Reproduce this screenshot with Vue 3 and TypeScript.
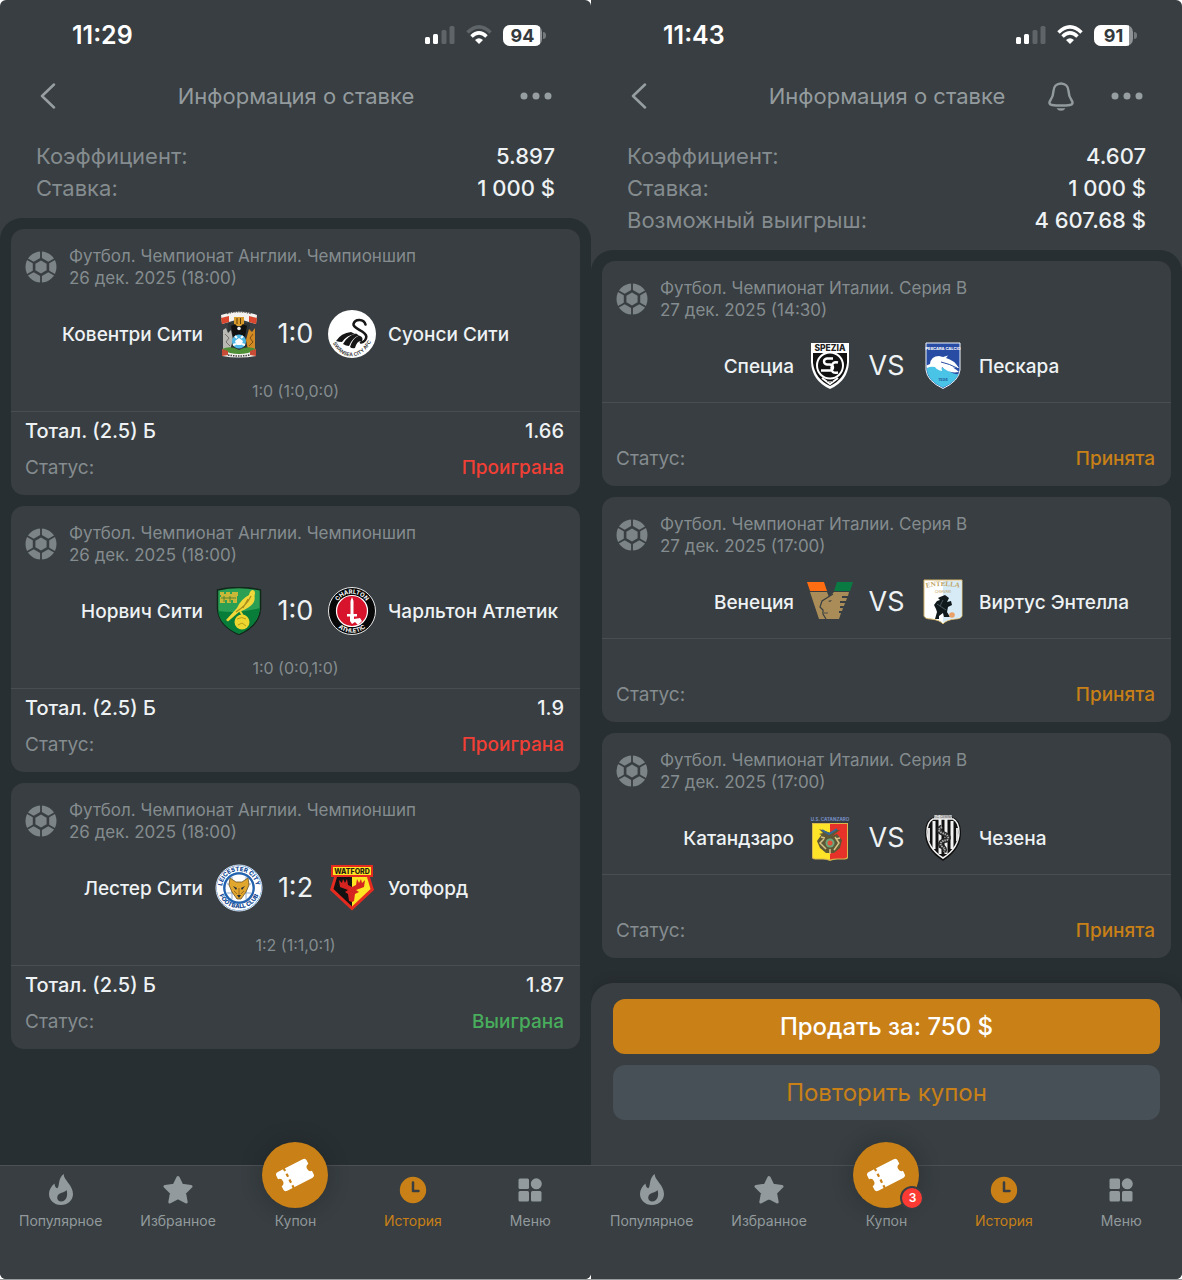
<script setup lang="ts">
interface Team {
  name: string
  crest: string
}

interface Bet {
  league: string
  date: string
  home: Team
  away: Team
  score: string
  periods?: string
  market?: string
  odds?: string
  status: string
  tone: 'lost' | 'won' | 'open'
}

interface Screen {
  id: string
  time: string
  battery: number
  weakWifi: boolean
  bell: boolean
  summary: { label: string; value: string }[]
  bets: Bet[]
  actions: boolean
  badge?: number
}

const england = 'Футбол. Чемпионат Англии. Чемпионшип'
const italy = 'Футбол. Чемпионат Италии. Серия В'

const screens: Screen[] = [
  {
    id: 'settled',
    time: '11:29',
    battery: 94,
    weakWifi: true,
    bell: false,
    summary: [
      { label: 'Коэффициент:', value: '5.897' },
      { label: 'Ставка:', value: '1 000 $' },
    ],
    bets: [
      {
        league: england, date: '26 дек. 2025 (18:00)',
        home: { name: 'Ковентри Сити', crest: 'coventry' }, away: { name: 'Суонси Сити', crest: 'swansea' },
        score: '1:0', periods: '1:0 (1:0,0:0)', market: 'Тотал. (2.5) Б', odds: '1.66',
        status: 'Проиграна', tone: 'lost',
      },
      {
        league: england, date: '26 дек. 2025 (18:00)',
        home: { name: 'Норвич Сити', crest: 'norwich' }, away: { name: 'Чарльтон Атлетик', crest: 'charlton' },
        score: '1:0', periods: '1:0 (0:0,1:0)', market: 'Тотал. (2.5) Б', odds: '1.9',
        status: 'Проиграна', tone: 'lost',
      },
      {
        league: england, date: '26 дек. 2025 (18:00)',
        home: { name: 'Лестер Сити', crest: 'leicester' }, away: { name: 'Уотфорд', crest: 'watford' },
        score: '1:2', periods: '1:2 (1:1,0:1)', market: 'Тотал. (2.5) Б', odds: '1.87',
        status: 'Выиграна', tone: 'won',
      },
    ],
    actions: false,
  },
  {
    id: 'open',
    time: '11:43',
    battery: 91,
    weakWifi: false,
    bell: true,
    summary: [
      { label: 'Коэффициент:', value: '4.607' },
      { label: 'Ставка:', value: '1 000 $' },
      { label: 'Возможный выигрыш:', value: '4 607.68 $' },
    ],
    bets: [
      {
        league: italy, date: '27 дек. 2025 (14:30)',
        home: { name: 'Специа', crest: 'spezia' }, away: { name: 'Пескара', crest: 'pescara' },
        score: 'VS', status: 'Принята', tone: 'open',
      },
      {
        league: italy, date: '27 дек. 2025 (17:00)',
        home: { name: 'Венеция', crest: 'venezia' }, away: { name: 'Виртус Энтелла', crest: 'entella' },
        score: 'VS', status: 'Принята', tone: 'open',
      },
      {
        league: italy, date: '27 дек. 2025 (17:00)',
        home: { name: 'Катандзаро', crest: 'catanzaro' }, away: { name: 'Чезена', crest: 'cesena' },
        score: 'VS', status: 'Принята', tone: 'open',
      },
    ],
    actions: true,
    badge: 3,
  },
]

const tabs = [
  { id: 'popular', label: 'Популярное' },
  { id: 'favorites', label: 'Избранное' },
  { id: 'coupon', label: 'Купон' },
  { id: 'history', label: 'История' },
  { id: 'menu', label: 'Меню' },
]
</script>

<template>
  <main class="board">
    <section v-for="s in screens" :key="s.id" class="phone">
      <div class="status-bar">
        <span class="time">{{ s.time }}</span>
        <div class="indicators">
          <svg width="30" height="20" viewBox="0 0 30 20" aria-hidden="true">
            <rect x="0" y="12" width="5" height="7" rx="1.5" fill="#fff" />
            <rect x="8" y="9" width="5" height="10" rx="1.5" fill="#fff" />
            <rect x="16.500" y="5" width="5" height="14" rx="1.5" fill="#5e6467" />
            <rect x="24.500" y="1" width="5" height="18" rx="1.5" fill="#5e6467" />
          </svg>
          <svg class="wifi" width="26" height="20" viewBox="0 0 26 20" fill="none" stroke="#fff" stroke-width="3.500" aria-hidden="true">
            <path d="M1.500 7.500Q13-3.700 24.500 7.500" :stroke="s.weakWifi ? '#5e6467' : '#fff'" />
            <path d="M5.500 11.500Q13 4.300 20.500 11.500" />
            <path d="M13 19L9 15Q13 11.400 17 15Z" fill="#fff" stroke="none" />
          </svg>
          <span class="battery"><span class="battery-level" :style="{ width: s.battery + '%' }"></span><span class="battery-text">{{ s.battery }}</span></span>
          <span class="battery-cap"></span>
        </div>
      </div>

      <header class="top">
        <button class="icon-btn" type="button" aria-label="Назад">
          <svg width="16" height="26" viewBox="0 0 16 26" fill="none" stroke="#979ea1" stroke-width="2.500" stroke-linecap="round" stroke-linejoin="round"><path d="M14 1.500L2 13L14 24.500" /></svg>
        </button>
        <h1>Информация о ставке</h1>
        <div class="top-actions">
          <button v-if="s.bell" class="icon-btn" type="button" aria-label="Уведомления">
            <svg width="26" height="29" viewBox="0 0 26 29" fill="none" stroke="#929a9d" stroke-width="2.500" stroke-linejoin="round">
              <path d="M13 1.500C8.500 1.500 5.700 4.700 5.500 9C5.300 13.500 4.500 15.500 2.300 18.500C.8 20.700 1.400 22.700 4 23C7 23.500 10 23.600 13 23.600C16 23.600 19 23.500 22 23C24.600 22.700 25.200 20.700 23.700 18.500C21.500 15.500 20.700 13.500 20.500 9C20.300 4.700 17.500 1.500 13 1.500Z" />
              <path d="M8.500 26.200H17.500Q16 28.800 13 28.800T8.500 26.200Z" fill="#929a9d" stroke="none" />
            </svg>
          </button>
          <button class="icon-btn" type="button" aria-label="Ещё">
            <svg width="32" height="8" viewBox="0 0 32 8" fill="#979ea1"><circle cx="4" cy="4" r="3.500" /><circle cx="16" cy="4" r="3.500" /><circle cx="28" cy="4" r="3.500" /></svg>
          </button>
        </div>
      </header>

      <dl class="summary">
        <div v-for="row in s.summary" :key="row.label">
          <dt>{{ row.label }}</dt>
          <dd>{{ row.value }}</dd>
        </div>
      </dl>

      <div class="content">
        <article v-for="bet in s.bets" :key="bet.home.name" class="card">
          <div class="card-head">
            <svg class="ball" width="32" height="32" viewBox="-16 -16 32 32" aria-hidden="true">
              <circle r="15.500" fill="#7c8487" />
              <path d="M0-16V16M-13.900-8L13.900 8M-13.900 8L13.900-8" stroke="#383e41" stroke-width="1.800" />
              <path d="M0-9.500L8.200-4.800V4.800L0 9.500L-8.200 4.800V-4.800Z" fill="#383e41" />
              <path d="M0-6.500L5.600-3.200V3.200L0 6.500L-5.600 3.200V-3.200Z" fill="#7c8487" />
            </svg>
            <p>{{ bet.league }}<br />{{ bet.date }}</p>
          </div>

          <div class="match">
            <span class="team home">{{ bet.home.name }}</span>
            <template v-for="(team, i) in [bet.home, bet.away]" :key="team.crest">
              <strong v-if="i === 1" class="score">{{ bet.score }}</strong>
              <svg class="crest" width="48" height="48" viewBox="0 0 48 48" aria-hidden="true">
                <g v-if="team.crest === 'coventry'">
                  <path d="M13 13H35V40H13Z" fill="#2e3436" />
                  <path d="M6 5Q24-2 42 5L41 14L34 12Q24 8 14 12L7 14Z" fill="#f4f2ee" />
                  <path d="M6 8L14 6V12L7 14ZM42 8L34 6V12L41 14Z" fill="#d9472f" />
                  <path d="M12 3.500Q24 0 36 3.500" stroke="#555" stroke-width="1.500" fill="none" stroke-dasharray="1.500 1" />
                  <path d="M19 7H29V16H19Z" fill="#d89b2b" /><path d="M22 8V14M25.500 8V14" stroke="#5a3d10" />
                  <path d="M16 16L20 14L24 18L28 14L32 16L30 27H18Z" fill="#111" /><circle cx="24" cy="18.500" r="1.800" fill="#eee" />
                  <path d="M8 20L11 18L13 23L16 20L18 30L15 40L8 41Z" fill="#b9b9b4" /><path d="M10 24L14 28L11 32L15 36" stroke="#77736c" fill="none" />
                  <path d="M40 18L37 22L34 19L31 30L33 40L40 41Z" fill="#d28a24" /><path d="M38 24L35 28L38 32L34 36" stroke="#7d4c0e" fill="none" />
                  <path d="M7 39Q16 35 24 40Q32 35 41 39L40 44H8Z" fill="#4f8f35" />
                  <circle cx="24" cy="31.500" r="7" fill="#4eb6e4" /><path d="M24 28L28 31L26.500 35H21.500L20 31Z" fill="#fff" /><path d="M20 26L22 28M28 26L26 28M18 35L21 34M30 35L27 34" stroke="#fff" stroke-width="2" />
                  <path d="M7 40L15 43Q24 45 33 43L41 40V46Q24 49 7 46Z" fill="#f3f1ec" /><path d="M7 39L13 41V45L7 46ZM41 39L35 41V45L41 46Z" fill="#c84b35" />
                  <path d="M13 45Q24 47 35 45" stroke="#444" stroke-width="1.500" fill="none" stroke-dasharray="1.500 1" />
                </g>
                <g v-else-if="team.crest === 'swansea'">
                  <circle cx="24" cy="24" r="24" fill="#fff" />
                  <path d="M37.500 14.500C36 8.500 27 8.500 25.500 14C24.500 19 38 20.500 38.300 26.500C38.300 29.500 36 32 33 32.500" fill="none" stroke="#161616" stroke-width="2.600" stroke-linecap="round" />
                  <path d="M8 31Q13 23 23 22L27 24Q19 25 14 32Q11 32 8 31Z" fill="#161616" />
                  <path d="M15 34Q19 26 28 23.500L31 25.500Q24 28 21 36Q18 36 15 34Z" fill="#161616" />
                  <path d="M22 37Q24 29 31 25.500Q36 27 34 31Q29 30 27 38Q24 39 22 37Z" fill="#161616" />
                  <path id="swansea-arc" d="M4.500 33Q13 47 24 46.300Q36 46 43.500 31" fill="none" />
                  <text font-size="5" font-weight="600" fill="#333"><textPath href="#swansea-arc" startOffset="50%" text-anchor="middle">SWANSEA CITY AFC</textPath></text>
                </g>
                <g v-else-if="team.crest === 'norwich'">
                  <path d="M2.500 3Q24-2 45.500 3V22Q44 39 24 47.500Q4 39 2.500 22Z" fill="#2ba055" stroke="#10291a" stroke-width="1.500" />
                  <path d="M3 24Q25 27 45 21Q43 39 24 47Q5 39 3 24Z" fill="#087d39" />
                  <path d="M5 5H9V7H11V5H15V7H17V5H23V9H22V16H18V13H16V16H12V13H10V16H5V10H6V8H5Z" fill="#c8b838" /><path d="M6 11H21M9 9V15M15 9V15" stroke="#3a7b31" stroke-width=".8" />
                  <path d="M38 3Q41 4 39.500 9C41 16 35 20 29 23L24 25L13 34.500L11 33L22 21Q26 12 34 8Q35 3 38 3Z" fill="#f1d83a" /><path d="M36 9Q32 18 21 25M33 12L28 21" stroke="#a98d1b" stroke-width="1.200" fill="none" />
                  <circle cx="27" cy="35" r="7.500" fill="#ecd62f" /><path d="M22 32Q27 29 31 32M23 38L27 36L31 39" stroke="#b59c16" fill="none" />
                  <path d="M25 24L28 29" stroke="#ecd62f" stroke-width="2" />
                </g>
                <g v-else-if="team.crest === 'charlton'">
                  <circle cx="24" cy="24" r="23.500" fill="#080808" stroke="#e8e8e8" stroke-width="1" />
                  <circle cx="24" cy="24" r="15.500" fill="#d7142c" stroke="#fff" stroke-width="1.200" />
                  <path d="M24 10L25.500 14V27H29V29.500H26V32L32 31L34 34L30 38L27 35L24 37L22 34V29.500H19V27H22.500V14Z" fill="#fff" />
                  <path id="charlton-top" d="M6.800 24A17.200 17.200 0 0 1 41.200 24" fill="none" />
                  <path id="charlton-bottom" d="M2.300 24A21.700 21.700 0 0 0 45.700 24" fill="none" />
                  <text font-size="6" font-weight="700" fill="#fff"><textPath href="#charlton-top" startOffset="50%" text-anchor="middle">CHARLTON</textPath></text>
                  <text font-size="6" font-weight="700" fill="#fff"><textPath href="#charlton-bottom" startOffset="50%" text-anchor="middle">ATHLETIC</textPath></text>
                </g>
                <g v-else-if="team.crest === 'leicester'">
                  <circle cx="24" cy="24" r="23" fill="#1b5ead" stroke="#dce8f5" stroke-width="1" />
                  <circle cx="24" cy="24" r="19" fill="none" stroke="#fff" stroke-width="6.500" />
                  <circle cx="24" cy="24" r="15.500" fill="#2464ae" /><circle cx="24" cy="24" r="13.500" fill="#fff" />
                  <path d="M12 20H36M12 29H36M17 13V35M31 13V35" stroke="#8fadd0" stroke-width="1" />
                  <path d="M15 14L21 18H27L33 14L34 21L31 28L26 35H22L17 28L14 21Z" fill="#e0a62e" stroke="#6b5326" stroke-width=".8" />
                  <path d="M18 22L22 24L21 26ZM30 22L26 24L27 26ZM22 31H26L24 34Z" fill="#1d2b3b" /><path d="M24 24V31M19 27L22 30M29 27L26 30" stroke="#8a5d1d" stroke-width=".8" />
                  <path id="leicester-top" d="M7 24A17 17 0 0 1 41 24" fill="none" />
                  <path id="leicester-bottom" d="M2.700 23A21.300 21.300 0 0 0 45.300 23" fill="none" />
                  <text font-size="6" font-weight="800" fill="#154b95"><textPath href="#leicester-top" startOffset="50%" text-anchor="middle">LEICESTER CITY</textPath></text>
                  <text font-size="6" font-weight="800" fill="#154b95"><textPath href="#leicester-bottom" startOffset="50%" text-anchor="middle">FOOTBALL CLUB</textPath></text>
                </g>
                <g v-else-if="team.crest === 'watford'">
                  <path d="M7 10H41L46 26L24 46.500L2 26Z" fill="#e52b20" />
                  <path d="M9 13H24V42.500L5.500 25Z" fill="#111" /><path d="M24 13H39L42.500 25L24 42.500Z" fill="#ffe522" />
                  <path d="M11 16L14 19L15 15L17 19L19 15L20 21L24 23L28 21L29 15L31 19L33 15L34 19L37 16L36 23L28 26L31 28L27 30L26 37L24 38L21 37L20 30L17 28L20 26L12 23Z" fill="#d52420" />
                  <path d="M4 2H44V12H4Z" fill="#ffe522" stroke="#e52b20" stroke-width="2" />
                  <text x="24" y="9.500" text-anchor="middle" font-size="7" font-weight="800" fill="#271a10">WATFORD</text>
                </g>
                <g v-else-if="team.crest === 'spezia'">
                  <path d="M5 1H43V20Q42 39 24 47Q6 39 5 20Z" fill="#fff" /><path d="M7 11H41V21Q39 37 24 44Q9 37 7 21Z" fill="#111" />
                  <text x="24" y="9" text-anchor="middle" font-size="8.500" font-weight="800" fill="#222">SPEZIA</text>
                  <circle cx="24" cy="23.500" r="13" fill="#111" stroke="#fff" stroke-width="2" />
                  <path d="M27 16.500H21Q18 17 18 19.500T21 22.500H24Q27 23 27 25.500T24 28.500H15M32 20.500Q26 19 25.500 25.500T32 30.500" fill="none" stroke="#fff" stroke-width="2.400" />
                  <path d="M16 36L24 42L32 36" fill="none" stroke="#fff" stroke-width="2" /><path d="M21 39.500H27" stroke="#999" />
                </g>
                <g v-else-if="team.crest === 'pescara'">
                  <path d="M7 1H41V28Q40 39 24 46.500Q8 39 7 28Z" fill="#284ca3" stroke="#eff5fb" stroke-width="1" />
                  <path d="M8 24Q20 23 30 29T40 30Q39 39 24 45.500Q9 39 8 28Z" fill="#49c4e6" />
                  <path d="M7.500 23.500L11 22Q12 14 20 14L24 15L29 13.500L27 16Q35 18 40 26L34 25.500Q38 28 40 30Q30 32 23 25Q22 26 23 29Q18 28 16 25Q12 24 8 26Z" fill="#fff" />
                  <path d="M22 20Q31 22 38 26" stroke="#284ca3" stroke-width="1" fill="none" />
                  <text x="24" y="8" text-anchor="middle" font-size="4" font-weight="700" fill="#fff">PESCARA CALCIO</text>
                  <text x="24" y="39" text-anchor="middle" font-size="4" font-weight="700" fill="#245d9b">1936</text>
                </g>
                <g v-else-if="team.crest === 'venezia'">
                  <path d="M1 4H18L21 13H4Z" fill="#ff6d13" /><path d="M31 4H47L44 13H28Z" fill="#087a42" />
                  <path d="M4 14H21L23 19L28 14H43L42 18H36V20H41L40 23H34V25H39L38 28H34V30H37L36 33H33V35H35L33 41H13Z" fill="#a98c58" />
                  <path d="M27 16L16 23L14 29L17 32V36L20 41" stroke="#383e41" stroke-width="1.200" fill="none" /><path d="M22 23L26 22L24 24Z" fill="#383e41" /><path d="M18 35H22" stroke="#383e41" stroke-width=".8" />
                </g>
                <g v-else-if="team.crest === 'entella'">
                  <path d="M5 2H43V38Q42 41 36 41Q27 42 24 46Q21 42 12 41Q6 41 5 38Z" fill="#fff" stroke="#d3b56c" stroke-width="1" /><path d="M24 3H42.500V38Q41 40.500 36 40.500Q28 41 24 45Z" fill="#d6ebf6" />
                  <path id="entella-arc" d="M6 10Q24 6 42 10" fill="none" /><text font-size="7" font-weight="700" fill="#bda260" font-family="Liberation Serif, serif"><textPath href="#entella-arc" startOffset="50%" text-anchor="middle">ENTELLA</textPath></text>
                  <text x="24" y="15" text-anchor="middle" font-size="3.500" fill="#ba9a55">CHIAVARI</text>
                  <path d="M21 19L26 17L30 20L28 24L32 23L33 27L29 29L28 34L31 39H25L24 35L20 38V41H16L18 34L17 31L15 27L18 23L21 22L19 20Z" fill="#10191c" /><path d="M18 26L27 32M24 22L21 28" stroke="#49565b" />
                  <circle cx="33" cy="37" r="2.800" fill="#e9a268" />
                </g>
                <g v-else-if="team.crest === 'catanzaro'">
                  <path d="M6 9H42V44Q41 46 34 45.500Q27 45 24 47Q21 45 14 45.500Q7 46 6 44Z" fill="#d8b84c" /><path d="M7 10H24V45.500Q20 44 14 44.500Q8 45 7 43Z" fill="#ffe329" /><path d="M24 10H41V43Q40 45 34 44.500Q28 44 24 45.500Z" fill="#e63228" />
                  <text x="24" y="6.500" text-anchor="middle" font-size="4.500" font-weight="700" fill="#7890c8">U.S. CATANZARO</text>
                  <path d="M22 18L13 15L17 19L13 20L21 23L16 20L11 27L14 34L20 39H28L34 34L36 26L31 20L26 22L34 16H29L25 19Z" fill="#5d5735" /><path d="M16 16L23 20L31 15" stroke="#346a96" stroke-width="2" fill="none" />
                  <path d="M18 25L14 29L20 35M29 23L33 29L28 36M24 35V40M19 24L15 23M30 25L34 24" stroke="#d3c288" stroke-width="1.500" fill="none" /><circle cx="24" cy="29" r="4.500" fill="#6ca37a" /><circle cx="24" cy="29" r="2.500" fill="#e05238" />
                </g>
                <g v-else>
                  <path d="M15 3Q7 5 6 17Q5 35 24 47Q43 35 42 17Q41 5 33 3Z" fill="#111" /><path d="M14 5Q8 8 8 18Q8 34 24 44Q40 34 40 18Q40 8 34 5Z" fill="none" stroke="#f2f2f2" stroke-width="1.500" />
                  <path d="M15 7V35M21 5V40M27 5V40M33 7V35" stroke="#f2f2f2" stroke-width="3" /><path d="M10 14V27M38 14V27" stroke="#ddd" stroke-width="2" />
                  <path d="M23 13Q17 16 23 19Q32 22 28 26Q20 27 22 32Q27 34 25 38" fill="none" stroke="#242424" stroke-width="5" /><path d="M23 13Q17 16 23 19Q32 22 28 26Q20 27 22 32Q27 34 25 38" fill="none" stroke="#aaa" stroke-width="2" stroke-dasharray="1.500 .8" />
                  <path d="M15 1H33V5H15Z" fill="#d8d8d8" /><text x="24" y="4" text-anchor="middle" font-size="3" fill="#333">A.C. CESENA</text>
                </g>
              </svg>
            </template>
            <span class="team away">{{ bet.away.name }}</span>
          </div>
          <p v-if="bet.periods" class="periods">{{ bet.periods }}</p>

          <div class="outcome">
            <div class="market"><span>{{ bet.market }}</span><span>{{ bet.odds }}</span></div>
            <div class="result"><span>Статус:</span><span :class="['status', bet.tone]">{{ bet.status }}</span></div>
          </div>
        </article>

        <div v-if="s.actions" class="actions">
          <button type="button" class="sell">Продать за: 750 $</button>
          <button type="button" class="repeat">Повторить купон</button>
        </div>
      </div>

      <nav class="tabs">
        <a v-for="tab in tabs" :key="tab.id" :href="'#' + tab.id" :class="['tab', { active: tab.id === 'history' }]">
          <span class="tab-icon">
            <svg v-if="tab.id === 'popular'" width="24" height="32" viewBox="0 0 24 32" fill="currentColor"><path fill-rule="evenodd" d="M14.700 0C14.500 6 24 11 24 20C24 26.500 18.500 31 12 31C5 31 0 26 0 20C0 16 2 12.500 5.500 9.500C5.700 12 6.700 14.200 8.300 14.200C10.800 12.500 8.500 4.500 14.700 0ZM17.500 16C15.500 19 12 18 9.500 20.500C7 23 8.500 27.500 12 27.500C18 27.500 19 20.500 17.500 16Z" /></svg>
            <svg v-else-if="tab.id === 'favorites'" width="30" height="30" viewBox="0 0 30 30" fill="currentColor" stroke="currentColor" stroke-width="3" stroke-linejoin="round"><path d="M15 2.500L18.800 10.200L28 11.500L21.500 17.800L23.200 27L15 22.600L6.800 27L8.500 17.800L2 11.500L11.200 10.200Z" /></svg>
            <span v-else-if="tab.id === 'coupon'" class="coupon-disc">
              <svg width="40" height="34" viewBox="-20 -17 40 34">
                <g transform="rotate(-27)">
                  <path d="M-14-10.500H14Q17-10.500 17-7.500V-4Q13.500-3.500 13.500 0T17 4V7.500Q17 10.500 14 10.500H-14Q-17 10.500-17 7.500V4Q-13.500 3.500-13.500 0T-17-4V-7.500Q-17-10.500-14-10.500Z" fill="#fff" />
                  <path d="M-7-11V-8M-7-5V-1.500M-7 1.500V5M-7 8V11" stroke="#c88017" stroke-width="2.200" />
                </g>
              </svg>
              <span v-if="s.badge" class="badge">{{ s.badge }}</span>
            </span>
            <svg v-else-if="tab.id === 'history'" width="28" height="28" viewBox="0 0 28 28"><circle cx="14" cy="14" r="13.200" fill="currentColor" /><path d="M14 6.500V15H19.500" fill="none" stroke="#383e41" stroke-width="2.500" stroke-linecap="round" stroke-linejoin="round" /></svg>
            <svg v-else width="24" height="24" viewBox="0 0 24 24" fill="currentColor"><rect x=".5" y=".5" width="10.500" height="10.500" rx="1.500" /><circle cx="18.300" cy="5.800" r="5.500" /><rect x=".5" y="13" width="10.500" height="10.500" rx="1.500" /><rect x="13" y="13" width="10.500" height="10.500" rx="1.500" /></svg>
          </span>
          <span class="tab-label">{{ tab.label }}</span>
        </a>
      </nav>
    </section>
  </main>
</template>

<style>
body {
  margin: 0;
  background: #fff;
}
</style>

<style scoped>
.board {
  display: grid;
  grid-template-columns: 1fr 1fr;
  min-height: 100vh;
  box-sizing: border-box;
  border-bottom: 1px solid #9a9d9e;
  font-family: Inter, "Liberation Sans", sans-serif;
  color: #eef2f4;
}
.phone {
  display: flex;
  flex-direction: column;
  min-width: 0;
  overflow: hidden;
  background: #383e41;
}
.phone:first-child {
  border-radius: 6px;
}
.phone:last-child {
  border-radius: 0 6px 6px 0;
}
button {
  font-family: inherit;
  border: 0;
  padding: 0;
  cursor: pointer;
}
h1, p, dl, dd {
  margin: 0;
}

.status-bar {
  display: flex;
  justify-content: space-between;
  align-items: center;
  height: 70px;
  padding: 0 45px 0 72px;
}
.time {
  font-size: 25px;
  font-weight: 600;
  color: #fff;
}
.indicators {
  display: flex;
  align-items: center;
}
.wifi {
  margin: 0 11px;
}
.battery {
  position: relative;
  display: flex;
  align-items: center;
  justify-content: center;
  width: 39px;
  height: 21px;
  border-radius: 7px;
  overflow: hidden;
  background: #8f9395;
}
.battery-level {
  position: absolute;
  left: 0;
  top: 0;
  bottom: 0;
  background: #fff;
}
.battery-text {
  position: relative;
  font-size: 18px;
  font-weight: 700;
  color: #34393c;
}
.battery-cap {
  width: 3px;
  height: 7px;
  margin-left: 1px;
  border-radius: 0 3px 3px 0;
  background: #74797b;
}

.top {
  display: grid;
  grid-template-columns: 1fr auto 1fr;
  align-items: center;
  height: 52px;
  padding: 0 39px 0 40px;
}
h1 {
  font-size: 22px;
  line-height: 28px;
  font-weight: 400;
  color: #949b9e;
}
.icon-btn {
  display: flex;
  align-items: center;
  justify-self: start;
  background: none;
}
.top-actions {
  display: flex;
  align-items: center;
  justify-content: flex-end;
  gap: 37px;
}

.summary {
  padding: 18px 36px 14px;
  font-size: 22px;
  line-height: 32px;
}
.summary > div {
  display: flex;
  justify-content: space-between;
}
dt {
  color: #858c8f;
}
dd {
  font-weight: 500;
}

.content {
  flex: 1;
  display: flex;
  flex-direction: column;
  gap: 11px;
  padding-top: 11px;
  border-radius: 22px 22px 0 0;
  background: #282f32;
}
.card {
  margin: 0 11px;
  border-radius: 13px;
  background: #383e41;
}
.card-head {
  display: flex;
  align-items: center;
  gap: 12px;
  padding: 16px 14px 0;
  font-size: 17px;
  line-height: 22px;
  color: #858c8f;
}
.match {
  display: grid;
  grid-template-columns: 1fr 48px 65px 48px 1fr;
  align-items: center;
  padding: 21px 0 2px;
}
.team {
  padding: 0 12px;
  font-size: 19px;
  font-weight: 500;
  white-space: nowrap;
}
.home {
  text-align: right;
}
.score {
  font-size: 27px;
  line-height: 32px;
  font-weight: 400;
  text-align: center;
}
.crest {
  display: block;
}
.periods {
  padding-top: 21px;
  font-size: 16px;
  line-height: 20px;
  text-align: center;
  color: #858c8f;
}
.outcome {
  margin-top: 10px;
  padding-bottom: 10px;
  border-top: 1px solid #484f52;
}
.market,
.result {
  display: flex;
  justify-content: space-between;
  align-items: center;
  padding: 0 16px 0 14px;
}
.market {
  height: 38px;
  font-size: 20px;
  font-weight: 500;
}
.result {
  height: 35px;
  font-size: 19px;
  color: #858c8f;
}
.status {
  font-weight: 500;
}
.lost {
  color: #f23f36;
}
.won {
  color: #48ad5c;
}
.open {
  color: #c88017;
}

.actions {
  display: flex;
  flex-direction: column;
  gap: 11px;
  flex: 1;
  margin-top: 14px;
  padding: 16px 22px;
  border-radius: 22px 22px 0 0;
  background: #383e41;
  box-shadow: 0 -2px 12px rgba(0, 0, 0, 0.12);
}
.actions button {
  height: 55px;
  border-radius: 12px;
  font-size: 24px;
}
.sell {
  background: #c88017;
  color: #fff;
  font-weight: 500;
}
.repeat {
  background: #475056;
  color: #c88017;
}

.tabs {
  display: grid;
  grid-template-columns: repeat(5, 1fr);
  height: 113px;
  padding: 0 2px;
  border-top: 1px solid #4b5154;
  background: #383e41;
}
.tab {
  display: flex;
  flex-direction: column;
  align-items: center;
  text-decoration: none;
  color: #929a9d;
}
.tab.active {
  color: #c88017;
}
.tab-icon {
  display: flex;
  align-items: center;
  justify-content: center;
  height: 48px;
}
.tab-icon svg {
  display: block;
}
.tab-label {
  font-size: 14px;
  line-height: 14px;
}
.coupon-disc {
  position: relative;
  display: flex;
  align-items: center;
  justify-content: center;
  width: 66px;
  height: 66px;
  margin-top: -30px;
  border-radius: 50%;
  background: #c88017;
  box-shadow: 0 0 20px rgba(20, 26, 30, 0.35);
}
.badge {
  position: absolute;
  right: -5px;
  bottom: -2px;
  width: 20px;
  height: 20px;
  border: 2px solid #383e41;
  border-radius: 50%;
  background: #fb3b33;
  color: #fff;
  font-size: 12px;
  line-height: 20px;
  font-weight: 600;
  text-align: center;
}
</style>
